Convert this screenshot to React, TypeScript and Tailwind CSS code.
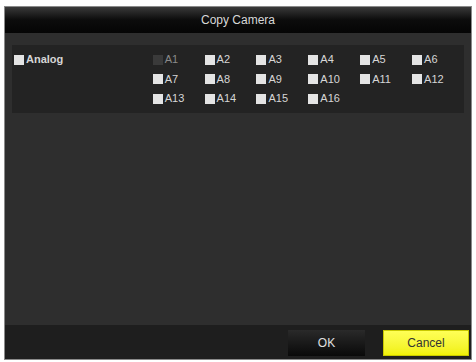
const channels = Array.from({ length: 16 }, (_, i) => `A${i + 1}`);

function Box({ dim }: { dim?: boolean }) {
  return (
    <span
      className={`inline-block h-[10px] w-[10px] shrink-0 ${
        dim ? "bg-[#3a3a3a]" : "bg-[#e4e4e4]"
      }`}
    />
  );
}

export default function App() {
  return (
    <div
      className="h-[362px] w-[476px] bg-white pl-[4px] pt-[6px]"
      style={{ fontFamily: '"Liberation Sans", Arial, sans-serif' }}
    >
      <div className="flex h-[354px] w-[468px] flex-col border border-[#8a8a8a] bg-[#2e2e2e]">
        <div className="flex h-[26px] items-center justify-center bg-gradient-to-b from-[#3a3a3a] via-[#0c0c0c] to-[#050505] text-[12px] text-[#d8d8d8]">
          Copy Camera
        </div>
        <div className="flex-1 px-[7px] pt-[12px]">
          <div className="flex h-[68px] bg-[#232323] pt-[8px] leading-none">
            <div className="flex h-[13px] w-[141px] items-center gap-[2px] pl-[2px] text-[11px] font-bold text-[#d6d6d6]">
              <Box />
              <span>Analog</span>
            </div>
            <div className="grid auto-rows-[13px] grid-cols-6 gap-y-[6.5px]">
              {channels.map((c, i) => (
                <div
                  key={c}
                  className="flex h-[13px] w-[52px] items-center gap-[2px] text-[11px] text-[#d6d6d6]"
                >
                  <Box dim={i === 0} />
                  <span className={i === 0 ? "text-[#8a8a8a]" : ""}>{c}</span>
                </div>
              ))}
            </div>
          </div>
        </div>
        <div className="flex h-[34px] items-center justify-end gap-[18px] bg-[#1e1e1e] pr-[2px] pt-[2px]">
          <button className="h-[26px] w-[77px] bg-gradient-to-b from-[#2a2a2a] to-[#0a0a0a] text-[12px] text-[#e0e0e0]">
            OK
          </button>
          <button className="h-[26px] w-[86px] border border-[#c8c800] bg-gradient-to-b from-[#ffff55] to-[#f0f000] text-[12px] text-[#333]">
            Cancel
          </button>
        </div>
      </div>
    </div>
  );
}
